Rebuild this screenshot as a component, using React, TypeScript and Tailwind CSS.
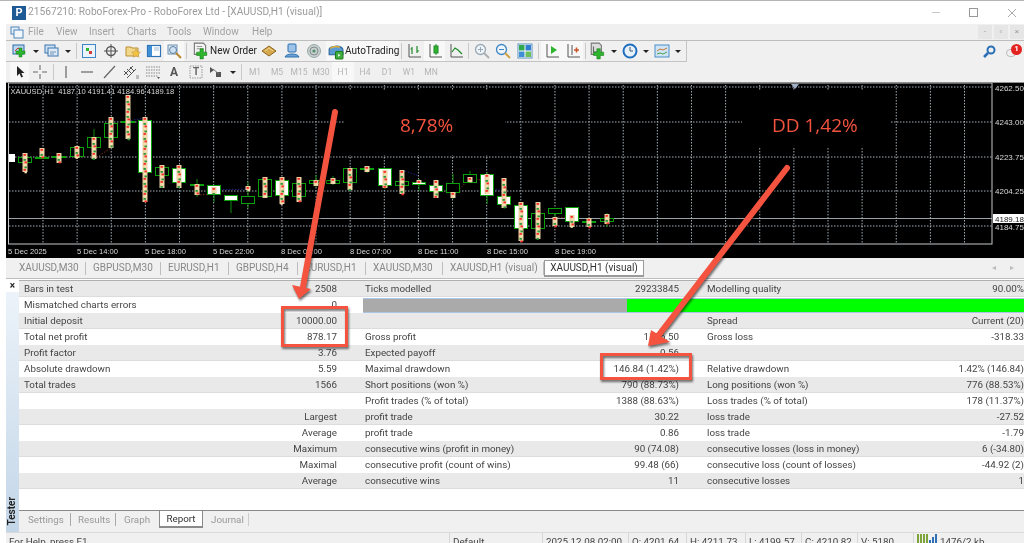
import type { ReactNode } from 'react';

const FONT = "font-['Roboto','Liberation_Sans',sans-serif]";

// --- chart data: x, body top, body bottom, wick top, wick bottom, white body, speckled range ---
type Candle = [number, number, number, number, number, boolean, number?, number?];

const candles: Candle[] = [
  [25, 157, 163, 153, 172, false, 153, 172],
  [42, 157, 158, 148, 158, false, 148, 157],
  [59, 156, 158, 153, 163, false, 153, 163],
  [77, 147, 157, 146, 159, false, 146, 158],
  [94, 137, 148, 129, 159, false, 137, 159],
  [111, 123, 138, 117, 148, false, 117, 148],
  [128, 121, 123, 95, 139, false, 95, 139],
  [145, 120, 173, 117, 202, true, 117, 202],
  [162, 167, 176, 165, 188, false, 165, 188],
  [179, 168, 183, 165, 188, true, 165, 188],
  [197, 184, 186, 179, 197, true, 184, 195],
  [214, 185, 195, 185, 202, true, 187, 194],
  [231, 195, 201, 195, 213, true],
  [248, 196, 204, 182, 208, false, 186, 190],
  [265, 179, 197, 177, 198, false, 177, 198],
  [282, 180, 196, 177, 204, true, 177, 204],
  [299, 183, 197, 177, 202, false, 177, 202],
  [316, 180, 184, 175, 187, false, 180, 186],
  [333, 180, 184, 176, 185, false, 178, 184],
  [350, 168, 183, 168, 191, false, 168, 190],
  [367, 168, 169, 166, 173, false, 166, 172],
  [385, 168, 186, 168, 189, true, 170, 188],
  [402, 181, 186, 170, 194, false, 170, 194],
  [419, 182, 185, 179, 191, true, 180, 183],
  [436, 185, 192, 180, 198, true, 180, 198],
  [453, 183, 193, 174, 199, false, 192, 198],
  [470, 174, 183, 171, 183, false, 177, 182],
  [487, 174, 196, 172, 204, true, 174, 194],
  [504, 196, 205, 178, 208, true, 178, 208],
  [521, 205, 229, 202, 241, true, 202, 241],
  [538, 213, 229, 202, 239, false, 202, 239],
  [555, 208, 214, 208, 226, false, 217, 226],
  [572, 207, 222, 207, 228, true, 215, 227],
  [589, 221, 223, 218, 227, false, 218, 227],
  [607, 218, 222, 213, 227, false, 214, 224],
];

const gridY = [87, 122, 157, 191, 226];
const gridX = Array.from({ length: 28 }, (_, i) => 43 + i * 34.13);
const dates: [number, string][] = [
  [8, '5 Dec 2025'], [77, '5 Dec 14:00'], [145, '5 Dec 18:00'], [213, '5 Dec 22:00'], [281, '8 Dec 03:00'],
  [350, '8 Dec 07:00'], [418, '8 Dec 11:00'], [487, '8 Dec 15:00'], [555, '8 Dec 19:00'],
];
const prices: [number, string][] = [[88, '4262.50'], [122, '4243.00'], [157, '4223.75'], [191, '4204.25'], [227, '4184.75']];
const tradeLines: [number, number, number, number, string][] = [
  [94, 159, 111, 148, '#7a2a1a'], [128, 121, 145, 118, '#23238a'], [197, 195, 214, 194, '#7a2a1a'],
  [214, 190, 248, 189, '#23238a'], [402, 170, 419, 176, '#23238a'], [453, 196, 470, 178, '#7a2a1a'],
  [470, 178, 487, 181, '#7a2a1a'], [487, 186, 504, 192, '#23238a'], [555, 217, 572, 218, '#7a2a1a'],
];

function Speckles({ x, from, to }: { x: number; from: number; to: number }) {
  const dots = [];
  for (let y = from + 1, i = 0; y < to; y += 2.5, i++) {
    const color = i % 3 === 0 ? '#ff2a2a' : i % 3 === 1 ? '#f8e2b8' : '#2c9a3c';
    dots.push(<rect key={y} x={x - 1.5 + (i % 2)} y={y} width={2.4} height={1.8} fill={color} />);
  }
  return (
    <g>
      <rect x={x - 2.5} y={from} width={5} height={to - from} fill="#e9cfa0" />
      {dots}
    </g>
  );
}

function Chart() {
  return (
    <svg viewBox="6 83 1018 175" className="block w-[1018px] h-[175px] bg-black">
      {gridY.map((y) => (
        <line key={y} x1={9} x2={992} y1={y} y2={y} stroke="#a2adb4" strokeWidth={1} strokeDasharray="1.5 1.5" />
      ))}
      {gridX.map((x) => (
        <line key={x} x1={x} x2={x} y1={85} y2={244} stroke="#a2adb4" strokeWidth={1} strokeDasharray="1.5 1.5" />
      ))}
      {/* zones effacees autour des annotations */}
      <rect x={345} y={90} width={160} height={65} fill="#000" />
      <rect x={742} y={90} width={148} height={58} fill="#000" />
      <line x1={9} x2={992} y1={218.5} y2={218.5} stroke="#9aa3a8" />
      <rect x={8.5} y={83} width={983.5} height={161} fill="none" stroke="#c4c8ca" />
      <path d="M791 84h8l-4 5z" fill="#9fb0c6" />
      <rect x={9} y={154} width={6} height={8} fill="#fff" />
      {tradeLines.map(([a, b, c, d, col], i) => (
        <line key={i} x1={a} y1={b} x2={c} y2={d} stroke={col} strokeDasharray="1.5 1.5" />
      ))}
      {candles.map(([x, top, bot, hi, lo, white, sa, sb]) => (
        <g key={x}>
          <line x1={x} x2={x} y1={hi} y2={lo} stroke="#0f8a0f" strokeWidth={1} />
          <rect x={x - 6.5} y={top + 0.5} width={13} height={Math.max(bot - top - 1, 1)} fill={white ? '#fff' : '#000'} stroke="#0aa00a" />
          {sa !== undefined && sb !== undefined && <Speckles x={x} from={sa} to={sb} />}
        </g>
      ))}
      <g className="font-['Liberation_Sans',sans-serif]" fontSize={7.6} fill="#d8d8d8">
        <text x={10.5} y={94} xmlSpace="preserve">XAUUSD,H1  4187.10 4191.41 4184.96 4189.18</text>
        {dates.map(([x, t]) => (
          <text key={t} x={x} y={254}>{t}</text>
        ))}
        {prices.map(([y, t]) => (
          <text key={t} x={995} y={y + 3} fontSize={8}>{t}</text>
        ))}
      </g>
      <rect x={993} y={214} width={31} height={9} fill="#fff" />
      <text x={995} y={221.5} fontSize={8} fill="#222" className="font-['Liberation_Sans',sans-serif]">4189.18</text>
    </svg>
  );
}

// --- ICONES ---
function Ico({ children, w = 16 }: { children: ReactNode; w?: number }) {
  return (
    <svg viewBox="0 0 16 16" width={w} height={w} className="block shrink-0">
      {children}
    </svg>
  );
}
const Plus = ({ x = 8, y = 8 }: { x?: number; y?: number }) => (
  <path d={`M${x + 2} ${y}h3v3h3v3h-3v3h-3v-3h-3v-3h3z`} fill="#2db52d" stroke="#147a14" strokeWidth={0.5} />
);
const NewChart = () => (
  <Ico>
    <rect x="1" y="2" width="11" height="9" fill="#bcd6ee" stroke="#2a6ca8" />
    <path d="M3 8l3-3 3 2" stroke="#c33" fill="none" />
    <Plus x={5} y={5} />
  </Ico>
);
const Profiles = () => (
  <Ico>
    <rect x="1" y="2" width="10" height="8" fill="#cfe0f2" stroke="#3a76b0" />
    <rect x="4" y="5" width="10" height="8" fill="#dfeaf6" stroke="#3a76b0" />
    <path d="M6 9h6M6 11h4" stroke="#6f93b8" />
  </Ico>
);
const MarketWatch = () => (
  <Ico>
    <rect x="1.5" y="1.5" width="13" height="13" fill="#eaf3fb" stroke="#3f86c6" />
    <path d="M5 5h3v3H5z" fill="#2db52d" />
    <path d="M8 8h3v3H8z" fill="#d43a3a" />
  </Ico>
);
const Crosshair = () => (
  <Ico>
    <circle cx="8" cy="8" r="4.5" fill="none" stroke="#555" strokeWidth="1.4" />
    <path d="M8 1v14M1 8h14" stroke="#555" />
  </Ico>
);
const FolderStar = () => (
  <Ico>
    <path d="M1 4h5l1 1h6v8H1z" fill="#f2d78a" stroke="#b98f36" />
    <path d="M11 6l1.4 2.8 3 .4-2.2 2 .6 3-2.8-1.5-2.8 1.5.6-3-2.2-2 3-.4z" fill="#f4c542" stroke="#b98f36" strokeWidth=".5" />
  </Ico>
);
const Navigator = () => (
  <Ico>
    <rect x="1.5" y="2.5" width="13" height="11" fill="#fff" stroke="#2f74b5" strokeWidth="1.2" />
    <rect x="2" y="3" width="4" height="10" fill="#3f8fd6" />
    <path d="M8 5h5M8 7h5" stroke="#9db7d2" />
  </Ico>
);
const Tester = () => (
  <Ico>
    <rect x="2" y="2" width="9" height="9" fill="#e6eef6" stroke="#6a8cac" />
    <circle cx="7" cy="7" r="3.5" fill="#cfe2f4" stroke="#5a7fa3" />
    <path d="M10 10l5 5" stroke="#b8892e" strokeWidth="2" />
  </Ico>
);
const NewOrder = () => (
  <Ico w={18}>
    <path d="M3 1h8l2 2v8H3z" fill="#f4f4f4" stroke="#777" />
    <path d="M5 4h5M5 6h6" stroke="#999" />
    <Plus x={6} y={6} />
  </Ico>
);
const Diamond = () => (
  <Ico>
    <path d="M1 8l7-5 7 5-7 5z" fill="#d6a94c" stroke="#8a6420" />
    <path d="M4 8l4-3 4 3" fill="none" stroke="#f0d48f" />
  </Ico>
);
const Person = () => (
  <Ico>
    <rect x="4" y="1" width="8" height="8" rx="1" fill="#9cc4ea" stroke="#2f6fae" />
    <path d="M1 14c1-4 13-4 14 0z" fill="#6ea3d6" stroke="#2f6fae" />
  </Ico>
);
const Signal = () => (
  <Ico>
    <circle cx="8" cy="8" r="6.5" fill="#c9cfcf" stroke="#9aa" />
    <circle cx="8" cy="8" r="4" fill="none" stroke="#7f8c8c" />
    <circle cx="8" cy="8" r="1.6" fill="#4a8f6a" />
  </Ico>
);
const AutoIcon = () => (
  <Ico w={17}>
    <path d="M2 6c0-3 11-5 13 0v5H2z" fill="#5a9bd4" stroke="#2c6296" />
    <path d="M3 5c3-2 6-2 9-1" stroke="#e0b13c" fill="none" strokeWidth="1.4" />
    <rect x="8" y="8" width="7" height="7" rx="1" fill="#3fae3f" stroke="#1f7a1f" />
    <path d="M10.5 10l2 1.5-2 1.5z" fill="#fff" />
  </Ico>
);
const BarChart = () => (
  <Ico>
    <path d="M3 1v13h12" fill="none" stroke="#555" />
    <path d="M6 4v7M6 6H4.500M11 3v7M11 8h2" stroke="#1e8a2a" strokeWidth="1.2" fill="none" />
  </Ico>
);
const CandleIco = () => (
  <Ico>
    <path d="M3 1v13h12" fill="none" stroke="#555" />
    <path d="M9 1v11" stroke="#1e8a2a" />
    <rect x="7" y="3" width="4" height="7" fill="#2db52d" stroke="#1e8a2a" />
  </Ico>
);
const LineIco = () => (
  <Ico>
    <path d="M3 1v13h12" fill="none" stroke="#555" />
    <path d="M4 9l3-4 3 2 4 4" fill="none" stroke="#1e8a2a" strokeWidth="1.2" />
  </Ico>
);
const Zoom = ({ plus }: { plus: boolean }) => (
  <Ico>
    <circle cx="6.500" cy="6.500" r="5" fill="#eef5fb" stroke={plus ? '#9aa8b4' : '#3f86c6'} strokeWidth="1.3" />
    <path d="M10 10l5 5" stroke={plus ? '#aab0b4' : '#d0a246'} strokeWidth="2" />
    <path d={plus ? 'M4 6.500h5M6.500 4v5' : 'M4 6.500h5'} stroke={plus ? '#9aa8b4' : '#3f86c6'} />
  </Ico>
);
const Tile = () => (
  <Ico>
    <rect x="1" y="1" width="14" height="14" fill="#fff" stroke="#5c8fbe" />
    <rect x="2" y="2" width="5.500" height="5.500" fill="#2fa84f" />
    <rect x="8.500" y="2" width="5.500" height="5.500" fill="#2f7fd0" />
    <rect x="2" y="8.500" width="5.500" height="5.500" fill="#3f8fd6" />
    <rect x="8.500" y="8.500" width="5.500" height="5.500" fill="#6cbf5a" />
  </Ico>
);
const ChartPlay = () => (
  <Ico>
    <path d="M3 1v13h12" fill="none" stroke="#555" />
    <path d="M7 3l6 4-6 4z" fill="#2db52d" />
  </Ico>
);
const ChartMark = () => (
  <Ico>
    <path d="M3 1v13h12" fill="none" stroke="#555" />
    <path d="M7 2v10" stroke="#555" />
    <path d="M9 7h5M11.500 4.500v5" stroke="#c8552a" strokeWidth="1.6" />
  </Ico>
);
const DocPlus = () => (
  <Ico w={18}>
    <path d="M2 1h7l2 2v8H2z" fill="#dcdcdc" stroke="#777" />
    <path d="M4 4v5h4" stroke="#666" fill="none" />
    <Plus x={5} y={6} />
  </Ico>
);
const Clock = () => (
  <Ico>
    <circle cx="8" cy="8" r="6.500" fill="#e8f1fa" stroke="#1f6fbf" strokeWidth="2" />
    <path d="M8 4v4h3" stroke="#36566f" fill="none" />
  </Ico>
);
const Template = () => (
  <Ico>
    <rect x="1" y="2" width="14" height="12" fill="#cfe4f6" stroke="#4d8ec8" />
    <path d="M3 8l3-2 3 1 4-2" stroke="#c9772e" fill="none" />
    <path d="M3 11l3-1 3 1 4-2" stroke="#4aa04a" fill="none" />
  </Ico>
);
const Cursor = () => (
  <Ico>
    <path d="M5 2v10l2.500-2.500 1.800 4 1.700-.8-1.700-3.700h3.200z" fill="#222" />
  </Ico>
);
const Cross = () => (
  <Ico>
    <path d="M8 1v5M8 10v5M1 8h5M10 8h5" stroke="#666" />
  </Ico>
);
const VLine = () => <Ico><path d="M8 2v12" stroke="#666" strokeWidth="1.2" /></Ico>;
const HLine = () => <Ico><path d="M2 8h12" stroke="#666" strokeWidth="1.2" /></Ico>;
const Diag = () => <Ico><path d="M3 14L14 2" stroke="#666" strokeWidth="1.2" /></Ico>;
const Channel = () => (
  <Ico>
    <path d="M1 11L10 2M4 14l9-9M1 7l4 4M4 5l5 5M7 3l4 4" stroke="#555" fill="none" />
    <path d="M13 12h3M13 14h3" stroke="#888" />
  </Ico>
);
const Fibo = () => (
  <Ico>
    <path d="M1 3h14M1 6h14M1 9h14M1 12h12" stroke="#888" strokeDasharray="1.5 1" />
    <path d="M12 13h3l-1.500 2z" fill="#555" />
  </Ico>
);
const TextBox = () => (
  <Ico>
    <rect x="2" y="2" width="12" height="12" fill="none" stroke="#999" strokeDasharray="1.5 1" />
  </Ico>
);
const Shapes = () => (
  <Ico>
    <path d="M1 3l4 3-4 3zM7 8h5v5H7z" fill="#555" />
    <path d="M4 5l6 5" stroke="#777" />
  </Ico>
);
const Caret = () => <span className="block w-0 h-0 border-x-[3px] border-x-transparent border-t-[3px] border-t-[#222]" />;

function Btn({ w, active, children }: { w: string; active?: boolean; children: ReactNode }) {
  return (
    <div className={`${w} h-[20px] flex items-center justify-center shrink-0 ${active ? 'bg-[#f8f8f8]' : ''}`}>{children}</div>
  );
}
const Sep = () => <div className="w-[1px] h-[16px] mx-[2px] bg-[#c9c9c9] shrink-0" />;

// --- RAPPORT ---
type Row = [string, string, string, string, string, string];
const rows: (Row | 'bar')[] = [
  ['Bars in test', '2508', 'Ticks modelled', '29233845', 'Modelling quality', '90.00%'],
  'bar',
  ['Initial deposit', '10000.00', '', '', 'Spread', 'Current (20)'],
  ['Total net profit', '878.17', 'Gross profit', '1196.50', 'Gross loss', '-318.33'],
  ['Profit factor', '3.76', 'Expected payoff', '0.56', '', ''],
  ['Absolute drawdown', '5.59', 'Maximal drawdown', '146.84 (1.42%)', 'Relative drawdown', '1.42% (146.84)'],
  ['Total trades', '1566', 'Short positions (won %)', '790 (88.73%)', 'Long positions (won %)', '776 (88.53%)'],
  ['', '', 'Profit trades (% of total)', '1388 (88.63%)', 'Loss trades (% of total)', '178 (11.37%)'],
  ['', 'Largest', 'profit trade', '30.22', 'loss trade', '-27.52'],
  ['', 'Average', 'profit trade', '0.86', 'loss trade', '-1.79'],
  ['', 'Maximum', 'consecutive wins (profit in money)', '90 (74.08)', 'consecutive losses (loss in money)', '6 (-34.80)'],
  ['', 'Maximal', 'consecutive profit (count of wins)', '99.48 (66)', 'consecutive loss (count of losses)', '-44.92 (2)'],
  ['', 'Average', 'consecutive wins', '11', 'consecutive losses', '1'],
];

function ReportRow({ row, odd }: { row: Row | 'bar'; odd: boolean }) {
  const bg = odd ? 'bg-[#e9e9e9] border-y border-t-transparent border-b-[#dcdcdc]' : 'bg-white';
  if (row === 'bar') {
    return (
      <div className={`h-[16px] flex items-center whitespace-nowrap ${bg}`}>
        <div className="w-[181px] pl-[5px]">Mismatched charts errors</div>
        <div className="w-[137px] text-right">0</div>
        <div className="flex-1 h-[15px] ml-[26px] flex border-y border-[#a8c6e4]">
          <div className="w-[264px] bg-[#aaaaaa]" />
          <div className="flex-1 bg-[#00ff00]" />
        </div>
      </div>
    );
  }
  return (
    <div className={`h-[16px] flex items-center whitespace-nowrap ${bg}`}>
      <div className="w-[181px] pl-[5px]">{row[0]}</div>
      <div className="w-[137px] text-right">{row[1]}</div>
      <div className="w-[223px] pl-[28px]">{row[2]}</div>
      <div className="w-[119px] text-right">{row[3]}</div>
      <div className="w-[201px] pl-[28px]">{row[4]}</div>
      <div className="w-[144px] text-right">{row[5]}</div>
    </div>
  );
}

const chartTabs: [string, string][] = [
  ['w-[74px]', 'XAUUSD,M30'], ['w-[75px]', 'GBPUSD,M30'], ['w-[68px]', 'EURUSD,H1'], ['w-[69px]', 'GBPUSD,H4'],
  ['w-[68px]', 'EURUSD,H1'], ['w-[77px]', 'XAUUSD,M30'], ['w-[101px]', 'XAUUSD,H1 (visual)'],
];
const status: [string, string][] = [
  ['w-[444px]', 'For Help, press F1'], ['w-[93px]', 'Default'], ['w-[86px]', '2025.12.08 02:00'], ['w-[58px]', 'O: 4201.64'],
  ['w-[59px]', 'H: 4211.73'], ['w-[56px]', 'L: 4199.57'], ['w-[56px]', 'C: 4210.82'], ['w-[56px]', 'V: 5180'],
];

export default function App() {
  return (
    <div className={`relative w-[1024px] h-[543px] overflow-hidden bg-white text-[9.8px] leading-none text-[#444] blur-[0.3px] ${FONT}`}>
      {/* BARRE DE TITRE */}
      <div className="h-[24px] flex items-center border-t border-[#b5b5b5] pl-[12px] bg-white">
        <div className="w-[14px] h-[14px] bg-[#1d5a96] flex items-center justify-center text-white text-[11px] font-bold">P</div>
        <span className="ml-[2px] text-[10.2px] text-[#9a9a9a] whitespace-nowrap">21567210: RoboForex-Pro - RoboForex Ltd - [XAUUSD,H1 (visual)]</span>
        <div className="ml-auto mr-[7px] flex items-center gap-[29px] text-[#a8a8a8]">
          <div className="w-[8px] h-[1px] bg-[#c8c8c8]" />
          <div className="w-[9px] h-[9px] border border-[#999]" />
          <svg width="10" height="10" viewBox="0 0 10 10"><path d="M1 1l8 8M9 1l-8 8" stroke="#aaa" /></svg>
        </div>
      </div>

      <div className="pl-[6px]">
        {/* MENU */}
        <div className="h-[17px] flex items-center bg-[#f0f0f0] border-b border-[#bdbdbd] text-[#a2a2a2] text-[10px]">
          <div className="w-[22px] flex justify-center">
            <svg width="14" height="13" viewBox="0 0 14 13">
              <rect x="1" y="1" width="8" height="7" fill="#e4eef8" stroke="#4f86ba" />
              <rect x="4" y="4" width="9" height="8" fill="#f2f7fc" stroke="#4f86ba" />
            </svg>
          </div>
          <span className="w-[28px]">File</span>
          <span className="w-[33px]">View</span>
          <span className="w-[38px]">Insert</span>
          <span className="w-[40px]">Charts</span>
          <span className="w-[36px]">Tools</span>
          <span className="w-[49px]">Window</span>
          <span>Help</span>
          <div className="ml-auto flex h-[14px] gap-[2px] text-[#999] text-[8px]">
            <div className="w-[14px] bg-[#e6e6e6] flex items-center justify-center">-</div>
            <div className="w-[14px] bg-[#e6e6e6] flex items-center justify-center">▫</div>
            <div className="w-[14px] bg-[#e6e6e6] flex items-center justify-center">×</div>
          </div>
        </div>

        {/* TOOLBAR 1 */}
        <div className="h-[21px] flex items-center bg-[#f0f0f0] relative">
          <div className="w-[681px] h-[21px] flex items-center border-r border-b border-[#c4c4c4] pl-[4px]">
            <Btn w="w-[20px]"><NewChart /></Btn>
            <Btn w="w-[12px]"><Caret /></Btn>
            <Btn w="w-[20px]"><Profiles /></Btn>
            <Btn w="w-[12px]"><Caret /></Btn>
            <Sep />
            <Btn w="w-[20px]"><MarketWatch /></Btn>
            <Btn w="w-[23px]"><Crosshair /></Btn>
            <Btn w="w-[21px]"><FolderStar /></Btn>
            <Btn w="w-[21px]"><Navigator /></Btn>
            <Btn w="w-[20px]" active><Tester /></Btn>
            <Sep />
            <div className="w-[68px] h-[20px] flex items-center shrink-0 text-[10px] text-[#222] pl-[2px] whitespace-nowrap">
              <NewOrder />
              <span className="ml-[1px]">New Order</span>
            </div>
            <Btn w="w-[24px]"><Diamond /></Btn>
            <Btn w="w-[22px]"><Person /></Btn>
            <Btn w="w-[21px]"><Signal /></Btn>
            <div className="w-[73px] h-[20px] ml-[2px] flex items-center bg-[#f8f8f8] shrink-0 text-[10px] text-[#222] pl-[1px] whitespace-nowrap">
              <AutoIcon />
              <span className="ml-[1px]">AutoTrading</span>
            </div>
            <Sep />
            <Btn w="w-[20px]"><BarChart /></Btn>
            <Btn w="w-[21px]" active><CandleIco /></Btn>
            <Btn w="w-[21px]"><LineIco /></Btn>
            <Sep />
            <Btn w="w-[21px]"><Zoom plus /></Btn>
            <Btn w="w-[21px]"><Zoom plus={false} /></Btn>
            <Btn w="w-[23px]"><Tile /></Btn>
            <Sep />
            <Btn w="w-[21px]" active><ChartPlay /></Btn>
            <Btn w="w-[21px]" active><ChartMark /></Btn>
            <Sep />
            <Btn w="w-[20px]"><DocPlus /></Btn>
            <Btn w="w-[12px]"><Caret /></Btn>
            <Btn w="w-[20px]"><Clock /></Btn>
            <Btn w="w-[12px]"><Caret /></Btn>
            <Btn w="w-[20px]"><Template /></Btn>
            <Btn w="w-[12px]"><Caret /></Btn>
          </div>
          <div className="ml-auto mr-[2px] flex items-center gap-[10px]">
            <svg width="13" height="13" viewBox="0 0 13 13">
              <circle cx="8" cy="5" r="3.500" fill="none" stroke="#2a6fb5" strokeWidth="2" />
              <path d="M5 8l-4 4" stroke="#2a6fb5" strokeWidth="2.500" />
            </svg>
            <div className="relative w-[16px] h-[16px]">
              <div className="absolute left-0 top-[5px] w-[10px] h-[8px] rounded-full border border-[#bbb]" />
              <div className="absolute right-0 top-0 w-[11px] h-[11px] rounded-full bg-[#e3231f] text-white text-[8px] font-bold flex items-center justify-center">1</div>
            </div>
          </div>
        </div>

        {/* TOOLBAR 2 */}
        <div className="h-[21px] flex items-center bg-[#f0f0f0] border-b border-[#909090] pl-[4px] text-[8.5px] text-[#b4b4b4]">
          <Btn w="w-[19px]" active><Cursor /></Btn>
          <Btn w="w-[22px]"><Cross /></Btn>
          <Sep />
          <Btn w="w-[20px]"><VLine /></Btn>
          <Btn w="w-[22px]"><HLine /></Btn>
          <Btn w="w-[22px]"><Diag /></Btn>
          <Btn w="w-[22px]"><Channel /></Btn>
          <Btn w="w-[21px]"><Fibo /></Btn>
          <Btn w="w-[22px]"><span className="text-[12px] font-bold text-[#555]">A</span></Btn>
          <Btn w="w-[22px]">
            <div className="relative">
              <TextBox />
              <span className="absolute inset-0 flex items-center justify-center text-[10px] font-bold text-[#666]">T</span>
            </div>
          </Btn>
          <Btn w="w-[20px]"><Shapes /></Btn>
          <Btn w="w-[12px]"><Caret /></Btn>
          <Sep />
          <Btn w="w-[22px]">M1</Btn>
          <Btn w="w-[22px]">M5</Btn>
          <Btn w="w-[22px]">M15</Btn>
          <Btn w="w-[22px]">M30</Btn>
          <Btn w="w-[22px]" active>H1</Btn>
          <Btn w="w-[22px]">H4</Btn>
          <Btn w="w-[22px]">D1</Btn>
          <Btn w="w-[22px]">W1</Btn>
          <Btn w="w-[22px]">MN</Btn>
        </div>

        <Chart />

        {/* ONGLETS DES GRAPHIQUES */}
        <div className="h-[21px] flex items-center bg-[#f0f0f0] border-b border-[#bdbdbd] pl-[6px] text-[#888] text-[10px]">
          {chartTabs.map(([w, t], i) => (
            <div key={i} className={`${w} h-[13px] pl-[7px] flex items-center border-r border-[#bdbdbd] whitespace-nowrap shrink-0`}>{t}</div>
          ))}
          <div className="w-[100px] h-[17px] flex items-center justify-center bg-white border border-b-2 border-[#9a9a9a] text-[#333] shrink-0">XAUUSD,H1 (visual)</div>
          <div className="ml-auto mr-[10px] flex gap-[14px] text-[#bbb] text-[8px]">
            <span>◂</span>
            <span>▸</span>
          </div>
        </div>

        {/* TESTER */}
        <div className="h-[253px] flex">
          <div className="w-[13px] relative bg-gradient-to-b from-[#eef4fa] to-[#c3d6e8] shrink-0">
            <div className="h-[13px] bg-white text-[#222] text-[10px] font-bold flex items-center justify-center">×</div>
            <span className="absolute left-[1px] bottom-[6px] [writing-mode:vertical-rl] rotate-180 text-[10px] font-semibold text-[#222]">Tester</span>
          </div>
          <div className="flex-1 flex flex-col min-w-0">
            <div className="h-[232px] border-b border-[#8a8a8a] pt-[1px] bg-white overflow-hidden">
              <div className="border-t border-[#b0b0b0]">
                {rows.map((r, i) => (
                  <ReportRow key={i} row={r} odd={i % 2 === 0} />
                ))}
              </div>
            </div>
            <div className="h-[21px] flex items-start bg-[#f0f0f0] pl-[3px] text-[#999]">
              <div className="w-[49px] h-[13px] mt-[2px] pl-[6px] flex items-center border-r border-[#aaa]">Settings</div>
              <div className="w-[45px] h-[13px] mt-[2px] pl-[7px] flex items-center border-r border-[#aaa]">Results</div>
              <div className="w-[43px] h-[13px] mt-[2px] pl-[8px] flex items-center">Graph</div>
              <div className="w-[44px] h-[17px] flex items-center justify-center bg-white border-x border-b-2 border-[#8a8a8a] text-[#333]">Report</div>
              <div className="w-[46px] h-[13px] mt-[2px] pl-[8px] flex items-center border-r border-[#ccc]">Journal</div>
            </div>
          </div>
        </div>

        {/* BARRE D'ETAT */}
        <div className="h-[11px] flex items-start bg-[#f0f0f0] border-t border-[#dadada] text-[#444] whitespace-nowrap">
          {status.map(([w, t], i) => (
            <div key={i} className={`${w} h-[11px] pl-[3px] pt-[4px] border-r border-[#d6d6d6]`}>{t}</div>
          ))}
          <div className="pl-[3px] flex items-start pt-[1px] gap-[2px]">
            <svg width="21" height="10" viewBox="0 0 21 10">
              <path d="M0 0h2v10H0zM3 0h2v10H3zM6 0h2v10H6zM9 0h2v10H9z" fill="#7da33a" />
              <path d="M12 6h2v4h-2zM15 3h2v7h-2zM18 0h2v10h-2z" fill="#2f6fb5" />
            </svg>
            <span className="pt-[3px]">1476/2 kb</span>
          </div>
        </div>
      </div>

      {/* ANNOTATIONS */}
      <span className="absolute left-[400px] top-[113px] font-['Open_Sans',sans-serif] text-[19px] leading-[24px] text-[#f4533f]">8,78%</span>
      <span className="absolute left-[772px] top-[113px] font-['Open_Sans',sans-serif] text-[19px] leading-[24px] text-[#f4533f]">DD 1,42%</span>
      <div className="absolute left-[281px] top-[306px] w-[67px] h-[41px] border-[3px] border-[#f4533f] drop-shadow-[1px_2px_1px_rgba(0,0,0,0.55)]" />
      <div className="absolute left-[600px] top-[353px] w-[92px] h-[27px] border-[3px] border-[#f4533f] drop-shadow-[1px_2px_1px_rgba(0,0,0,0.55)]" />
      <svg className="absolute inset-0 drop-shadow-[1px_2px_1px_rgba(0,0,0,0.55)]" width="1024" height="543" viewBox="0 0 1024 543" fill="#f4533f" stroke="none">
        <path d="M335 112L303 287" stroke="#f4533f" strokeWidth="6" strokeLinecap="round" />
        <path d="M299 299L292 285L311 289Z" />
        <path d="M787 168L658 336" stroke="#f4533f" strokeWidth="6" strokeLinecap="round" />
        <path d="M648 346L651 330L670 342Z" />
      </svg>
    </div>
  );
}
